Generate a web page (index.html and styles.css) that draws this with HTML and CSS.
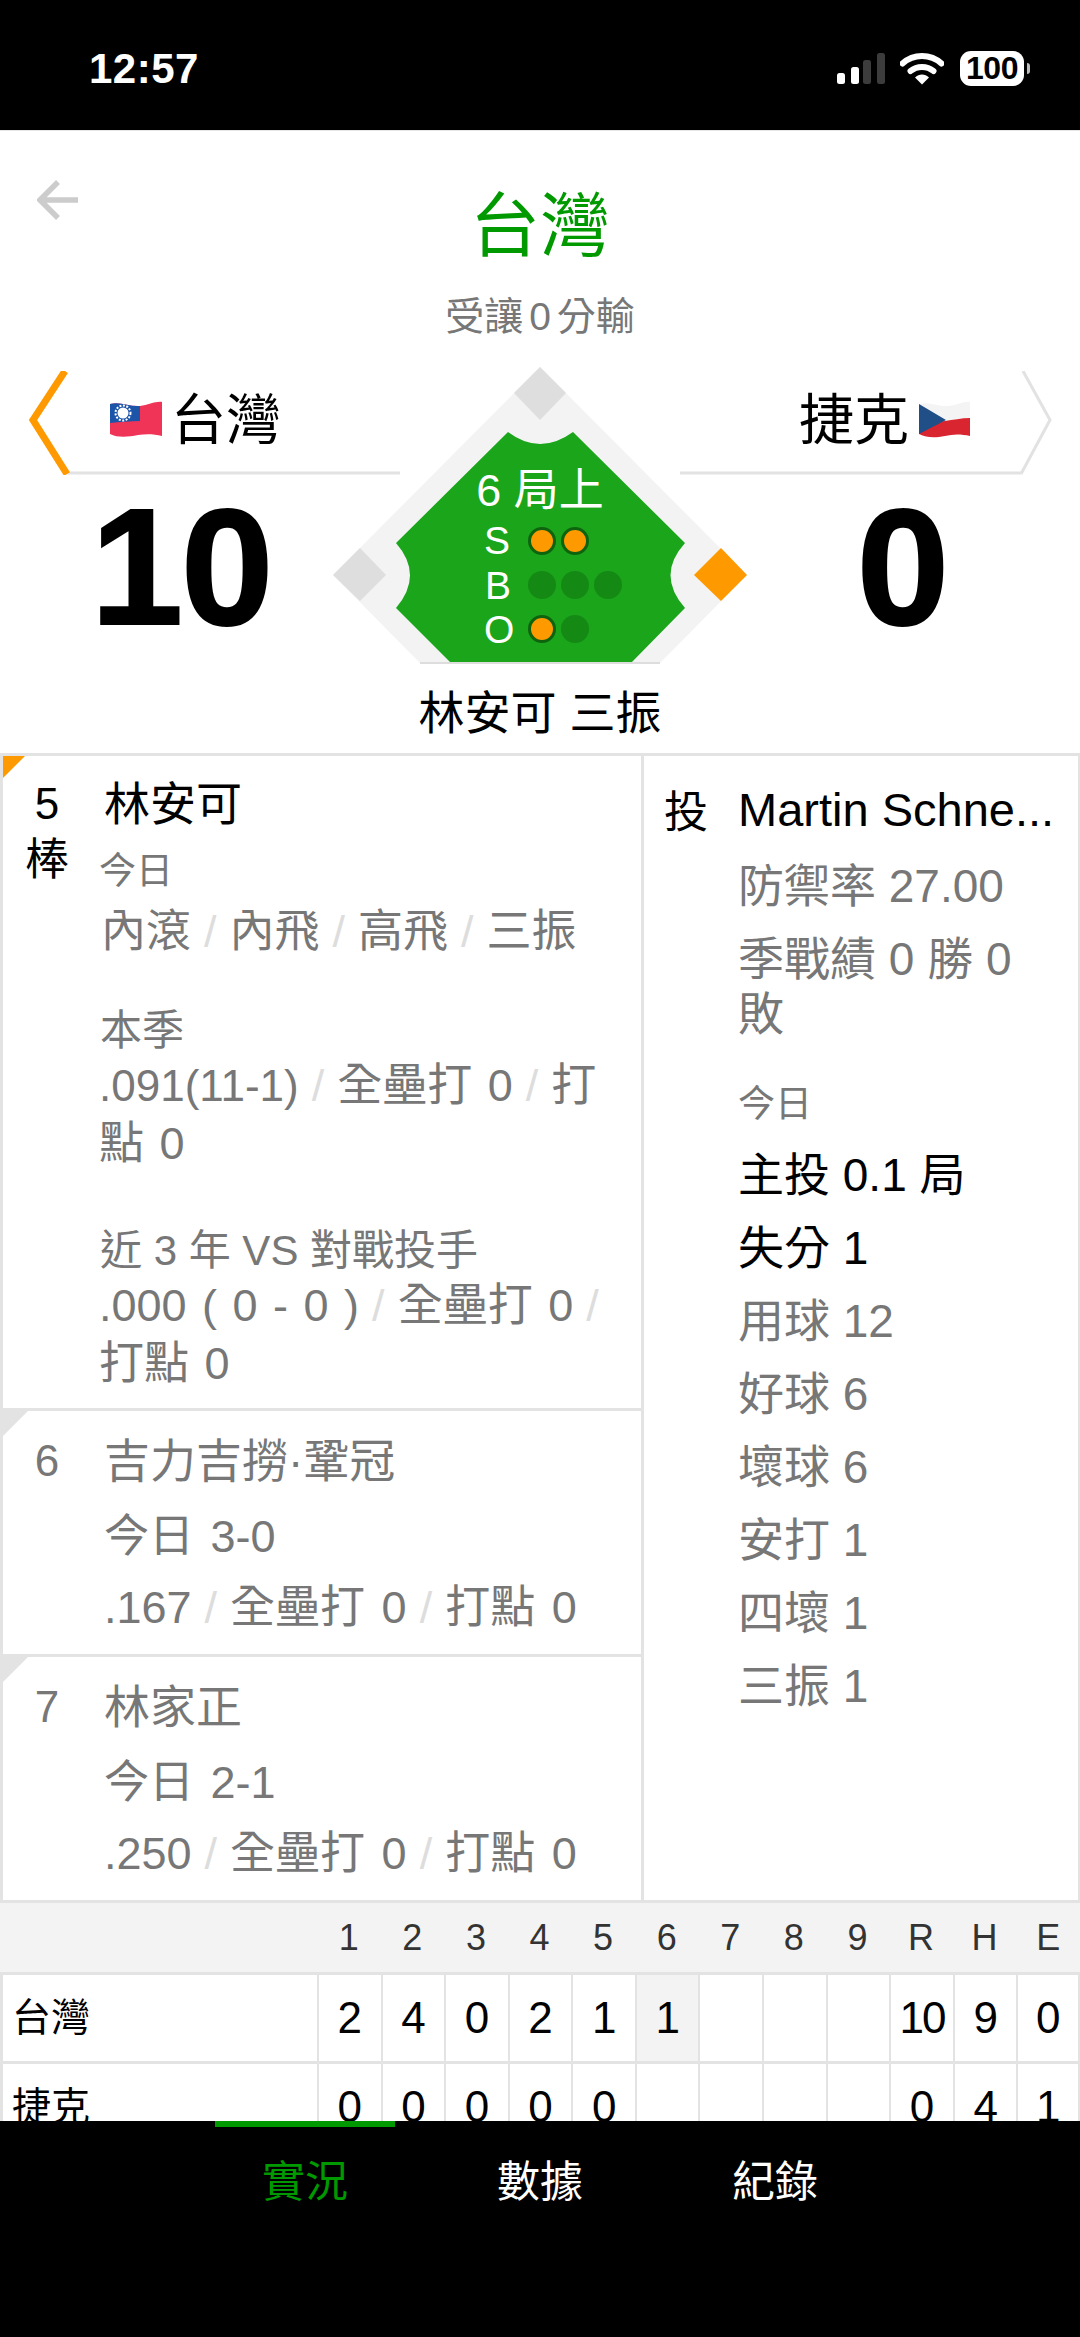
FILE: index.html
```html
<!DOCTYPE html>
<html lang="zh-Hant">
  <head>
    <meta charset="UTF-8" />
    <meta name="viewport" content="width=device-width, initial-scale=1.0" />
    <title>台灣</title>
    <link rel="stylesheet" href="styles.css">
  </head>

  <body>
    <div class="statusbar">
      <span class="clock">12:57</span>
      <div class="status-icons">
        <svg class="signal" viewBox="0 0 48 32" width="48" height="32">
          <rect x="0" y="20" width="8" height="11" rx="2.5" fill="#fff" />
          <rect x="14" y="14" width="8" height="17" rx="2.5" fill="#fff" />
          <rect x="26" y="7" width="8" height="24" rx="2.5" fill="#3c3c3c" />
          <rect x="40" y="0" width="8" height="31" rx="2.5" fill="#3c3c3c" />
        </svg>
        <svg class="wifi" viewBox="0 0 44 32" width="44" height="32">
          <path d="M2.500 10.500C13.500 0.500 30.500 0.500 41.500 10.500" fill="none" stroke="#fff" stroke-width="6" stroke-linecap="round" />
          <path d="M10.500 18C17 12.500 27 12.500 33.500 18" fill="none" stroke="#fff" stroke-width="6" stroke-linecap="round" />
          <path d="M15 24.500C19 20.500 25 20.500 29 24.500L22 31.500Z" fill="#fff" />
        </svg>
        <div class="battery"><span class="battery-level">100</span></div>
        <span class="battery-nub"></span>
      </div>
    </div>

    <header class="topbar">
      <svg class="back" viewBox="0 0 44 42" width="44" height="42">
        <path d="M41 21H4M21 3L3 21L21 39" fill="none" stroke="#cccccc" stroke-width="5.500" />
      </svg>
      <h1 class="title">台灣</h1>
      <p class="handicap">受讓<span class="handicap-num">0</span>分輸</p>
    </header>

    <section class="hero">
      <div class="side">
        <div class="team team-away">
          <svg class="team-tab" viewBox="0 0 400 104" width="400" height="104">
            <path d="M67 102H400" fill="none" stroke="#e2e2e2" stroke-width="3" />
            <path d="M65 0L33 49L67 103" fill="none" stroke="#ff9900" stroke-width="7" />
          </svg>
          <svg class="flag" viewBox="0 0 52 37" width="52" height="37">
            <path d="M0 3C10 0 20 6 30 5C38 4 46 0 52 1V35C44 33 36 33 28 34C18 36 8 37 0 33Z" fill="#ef3458" />
            <path d="M0 3C10 0 20 6 30 5V20C20 20 10 21 0 22Z" fill="#1c54a8" />
            <circle cx="13" cy="12" r="5.500" fill="#fff" />
            <circle cx="13" cy="12" r="7.500" fill="none" stroke="#fff" stroke-width="2" stroke-dasharray="2 1.500" />
          </svg>
          <span class="team-name">台灣</span>
        </div>
        <div class="score">10</div>
      </div>

      <div class="center">
        <svg class="field" viewBox="320 360 440 310" width="440" height="310">
          <path d="M540 367L747 575L660 663H420L333 575Z" fill="#f3f3f3" />
          <path d="M508 432Q540 456 573 432L685 543Q656 575 685 608L631 663H451L396 608Q424 575 396 543Z" fill="#1ba51b" />
          <path d="M420 663H660" stroke="#dddddd" stroke-width="2" />
          <polygon points="540,367 566,393 540,420 514,393" fill="#dedede" />
          <polygon points="360,548 386,575 360,601 333,575" fill="#dedede" />
          <polygon points="721,548 747,575 721,601 694,575" fill="#ff9900" />
          <text class="inning" x="540" y="506">6 局上</text>
          <text class="count-label" x="484" y="554">S</text>
          <text class="count-label" x="485" y="599">B</text>
          <text class="count-label" x="484" y="643">O</text>
          <circle class="dot-on" cx="542" cy="541" r="12.500" />
          <circle class="dot-on" cx="575" cy="541" r="12.500" />
          <circle class="dot" cx="542" cy="585" r="14" />
          <circle class="dot" cx="575" cy="585" r="14" />
          <circle class="dot" cx="608" cy="585" r="14" />
          <circle class="dot-on" cx="542" cy="629" r="12.500" />
          <circle class="dot" cx="575" cy="629" r="14" />
        </svg>
        <div class="play">林安可 三振</div>
      </div>

      <div class="side">
        <div class="team team-home">
          <svg class="team-tab" viewBox="0 0 400 104" width="400" height="104">
            <path d="M0 102H341" fill="none" stroke="#e2e2e2" stroke-width="3" />
            <path d="M343 0L370 49L341 103" fill="none" stroke="#e2e2e2" stroke-width="3" />
          </svg>
          <span class="team-name">捷克</span>
          <svg class="flag" viewBox="0 0 52 37" width="52" height="37">
            <path d="M0 3C10 0 20 6 30 5C38 4 46 0 51 1V17C42 17 34 19 26 20C16 20 8 19 0 20Z" fill="#f4f4f4" />
            <path d="M0 20C8 19 16 21 26 20C34 19 42 17 51 17V35C42 33 34 33 26 35C16 37 8 37 0 33Z" fill="#d9252f" />
            <path d="M0 3L27 19L0 33Z" fill="#1f4f86" />
          </svg>
        </div>
        <div class="score score-home">0</div>
      </div>
    </section>

    <main class="content">
      <div class="matchup">
        <div class="batters">
          <div class="batter batter-first is-up">
            <div class="order">5<br />棒</div>
            <div class="batter-info">
              <div class="batter-name is-current">林安可</div>
              <div class="caption">今日</div>
              <div class="stat-today">內滾<span class="sep">/</span>內飛<span class="sep">/</span>高飛<span class="sep">/</span>三振</div>
              <div class="stat-head stat-season">本季</div>
              <div class="stat-line"><span class="stat-avg">.091(11-1)</span><span class="sep">/</span>全壘打 0<span class="sep">/</span>打點 0</div>
              <div class="stat-head stat-versus">近 3 年 VS 對戰投手</div>
              <div class="stat-line">.000 ( 0 - 0 )<span class="sep">/</span>全壘打 0<span class="sep">/</span>打點 0</div>
            </div>
          </div>
          <div class="batter">
            <div class="order order-next">6</div>
            <div class="batter-info">
              <div class="batter-name">吉力吉撈·鞏冠</div>
              <div class="stat-row">今日 3-0</div>
              <div class="stat-row">.167<span class="sep">/</span>全壘打 0<span class="sep">/</span>打點 0</div>
            </div>
          </div>
          <div class="batter">
            <div class="order order-next">7</div>
            <div class="batter-info">
              <div class="batter-name">林家正</div>
              <div class="stat-row">今日 2-1</div>
              <div class="stat-row">.250<span class="sep">/</span>全壘打 0<span class="sep">/</span>打點 0</div>
            </div>
          </div>
        </div>

        <div class="pitcher">
          <div class="pitcher-top">
            <span class="pitcher-tag">投</span>
            <span class="pitcher-name">Martin Schne...</span>
          </div>
          <div class="pitcher-info">
            <div class="era">防禦率 27.00</div>
            <div class="record">季戰績 0 勝 0 敗</div>
            <div class="caption pitcher-caption">今日</div>
            <div class="pitch-row is-dark">主投 0.1 局</div>
            <div class="pitch-row is-dark">失分 1</div>
            <div class="pitch-row">用球 12</div>
            <div class="pitch-row">好球 6</div>
            <div class="pitch-row">壞球 6</div>
            <div class="pitch-row">安打 1</div>
            <div class="pitch-row">四壞 1</div>
            <div class="pitch-row">三振 1</div>
          </div>
        </div>
      </div>

      <div class="linescore">
        <div class="ls-row ls-head">
          <span></span><span>1</span><span>2</span><span>3</span><span>4</span><span>5</span><span>6</span><span>7</span><span>8</span><span>9</span><span>R</span><span>H</span><span>E</span>
        </div>
        <div class="ls-row ls-body">
          <span class="ls-team">台灣</span><span>2</span><span>4</span><span>0</span><span>2</span><span>1</span><span class="ls-now">1</span><span></span><span></span><span></span><span class="ls-tight">10</span><span>9</span><span>0</span>
        </div>
        <div class="ls-row ls-body">
          <span class="ls-team">捷克</span><span>0</span><span>0</span><span>0</span><span>0</span><span>0</span><span></span><span></span><span></span><span></span><span>0</span><span>4</span><span>1</span>
        </div>
      </div>
    </main>

    <nav class="tabs">
      <a class="tab is-active">實況</a>
      <a class="tab">數據</a>
      <a class="tab">紀錄</a>
    </nav>
  </body>
</html>
```

FILE: styles.css
```css
* { box-sizing: border-box; }
html, body { margin: 0; padding: 0; }
body {
  width: 1080px; height: 2337px; overflow: hidden;
  display: flex; flex-direction: column;
  background: #fff; color: #000;
  font-family: "Liberation Sans", "Noto Sans CJK TC", sans-serif;
}

/* status bar */
.statusbar {
  height: 130px; flex: none; background: #000; color: #fff;
  display: flex; justify-content: space-between; align-items: flex-start;
  padding: 0 50px 0 89px;
}
.clock { font-size: 42px; font-weight: bold; line-height: 40px; margin-top: 49px; letter-spacing: 0.5px; }
.status-icons { display: flex; align-items: flex-start; margin-top: 51px; }
.signal { margin-top: 2px; margin-right: 15px; }
.wifi { margin-top: 2px; margin-right: 16px; }
.battery {
  width: 64px; height: 35px; border-radius: 11px; background: #fff;
  display: flex; align-items: center; justify-content: center;
}
.battery-level { color: #000; font-size: 32px; font-weight: bold; letter-spacing: -0.5px; }
.battery-nub { width: 3px; height: 11px; margin: 12px 0 0 3px; background: #bbb; border-radius: 0 3px 3px 0; }

/* title */
.topbar { position: relative; height: 241px; flex: none; border-top: 1px solid #e6e6e6; text-align: center; }
.back { position: absolute; left: 37px; top: 48px; }
.title { margin: 0; padding-top: 56px; font-size: 70px; line-height: 80px; font-weight: normal; color: #009900; }
.handicap { margin: 0; padding-top: 25px; font-size: 39px; line-height: 50px; color: #777; }
.handicap-num { margin: 0 6px; }

/* score area */
.hero { height: 382px; flex: none; display: grid; grid-template-columns: 400px 280px 400px; }
.team { position: relative; height: 103px; display: flex; align-items: center; }
.team-tab { position: absolute; left: 0; top: 0; }
.team-away { padding-left: 110px; gap: 9px; }
.team-home { padding-left: 119px; gap: 10px; }
.team-name { font-size: 55px; line-height: 60px; position: relative; margin-top: -6px; }
.flag { position: relative; flex: none; margin-top: -7px; }
.score { width: 362px; font-size: 166px; font-weight: bold; line-height: 186px; text-align: center; letter-spacing: -2px; -webkit-text-stroke: 2px #000; }
.score-home { margin-left: 42px; width: 360px; }
.center { position: relative; z-index: 1; }
.field { display: block; margin: -11px -80px 0; }
.inning { fill: #fff; font-size: 45px; text-anchor: middle; }
.count-label { fill: #fff; font-size: 39px; }
.dot { fill: #148a14; }
.dot-on { fill: #ff9900; stroke: #0e640e; stroke-width: 3; }
.play { margin-top: 13px; font-size: 46px; line-height: 60px; text-align: center; white-space: nowrap; }

/* batters and pitcher */
.content { flex: 1; min-height: 0; overflow: hidden; }
.matchup {
  height: 1150px; display: grid; grid-template-columns: 641px 1fr;
  border: 3px solid #e3e3e3; border-right-width: 2px;
}
.batters { border-right: 3px solid #e3e3e3; display: flex; flex-direction: column; }
.batter {
  position: relative; height: 246px; display: grid; grid-template-columns: 96px 1fr;
  border-top: 3px solid #e3e3e3; color: #777;
}
.batter-first { height: 652px; border-top: 0; padding-top: 20px; color: #000; }
.batter::before {
  content: ""; position: absolute; left: 0; top: 0;
  border-style: solid; border-width: 25px 25px 0 0;
  border-color: #e3e3e3 transparent transparent transparent;
}
.batter.is-up::before { border-top-color: #ff9900; border-width: 22px 22px 0 0; }
.order { font-size: 44px; line-height: 56px; text-align: center; padding-right: 8px; }
.order-next { padding-top: 22px; color: #777; }
.batter-name { font-size: 46px; line-height: 56px; padding-left: 5px; color: #777; white-space: nowrap; }
.batter:not(.batter-first) .batter-name { padding-top: 22px; box-sizing: content-box; }
.batter-name.is-current { color: #000; }
.batter-info { color: #777; }
.caption { font-size: 37px; line-height: 46px; margin-top: 17px; }
.stat-today { font-size: 45px; line-height: 58px; margin-top: 8px; padding-left: 2px; white-space: nowrap; }
.stat-head { font-size: 42px; line-height: 52px; padding-left: 1px; }
.stat-season { margin-top: 44px; }
.stat-versus { margin-top: 52px; }
.stat-line { font-size: 45px; line-height: 58px; width: 525px; word-spacing: 3px; }
.stat-avg { font-size: 44px; }
.stat-row { font-size: 45px; line-height: 58px; margin-top: 19px; padding-left: 5px; white-space: nowrap; word-spacing: 4px; }
.batter .stat-row + .stat-row { margin-top: 13px; }
.sep { color: #dddddd; margin: 0 13px; }

.pitcher { padding: 25px 20px 0 20px; color: #777; }
.pitcher-top { display: flex; align-items: center; height: 56px; color: #000; font-size: 47px; white-space: nowrap; }
.pitcher-tag { width: 74px; font-size: 44px; }
.pitcher-info { padding-left: 74px; font-size: 46px; }
.era { line-height: 55px; margin-top: 22px; }
.record { line-height: 55px; margin-top: 18px; }
.pitcher-caption { margin-top: 40px; }
.pitch-row { line-height: 73px; white-space: nowrap; }
.pitcher-caption + .pitch-row { margin-top: 11px; }
.pitch-row.is-dark { color: #000; }

/* line score */
.ls-row { display: grid; grid-template-columns: 317px repeat(12, 1fr); border-bottom: 3px solid #e3e3e3; }
.ls-row span { display: block; text-align: center; }
.ls-head { height: 72px; background: #f3f3f3; font-size: 36px; line-height: 69px; color: #333; }
.ls-body { height: 89px; font-size: 44px; line-height: 86px; }
.ls-body span { border-left: 2px solid #e3e3e3; }
.ls-body .ls-team { border-left: 3px solid #e3e3e3; font-size: 39px; text-align: left; padding-left: 9px; }
.ls-body span:last-child { border-right: 2px solid #e3e3e3; }
.ls-body .ls-now { background: #f3f3f3; }
.ls-tight { letter-spacing: -2px; }

/* bottom tabs */
.tabs { height: 216px; flex: none; background: #000; display: flex; justify-content: center; }
.tab {
  width: 235px; display: flex; justify-content: center;
  font-size: 43px; line-height: 60px; padding-top: 31px; color: #fff;
  position: relative;
}
.tab.is-active { color: #009900; }
.tab.is-active::before {
  content: ""; position: absolute; left: 27px; right: 28px; top: 0; height: 6px; background: #009900;
}
```
